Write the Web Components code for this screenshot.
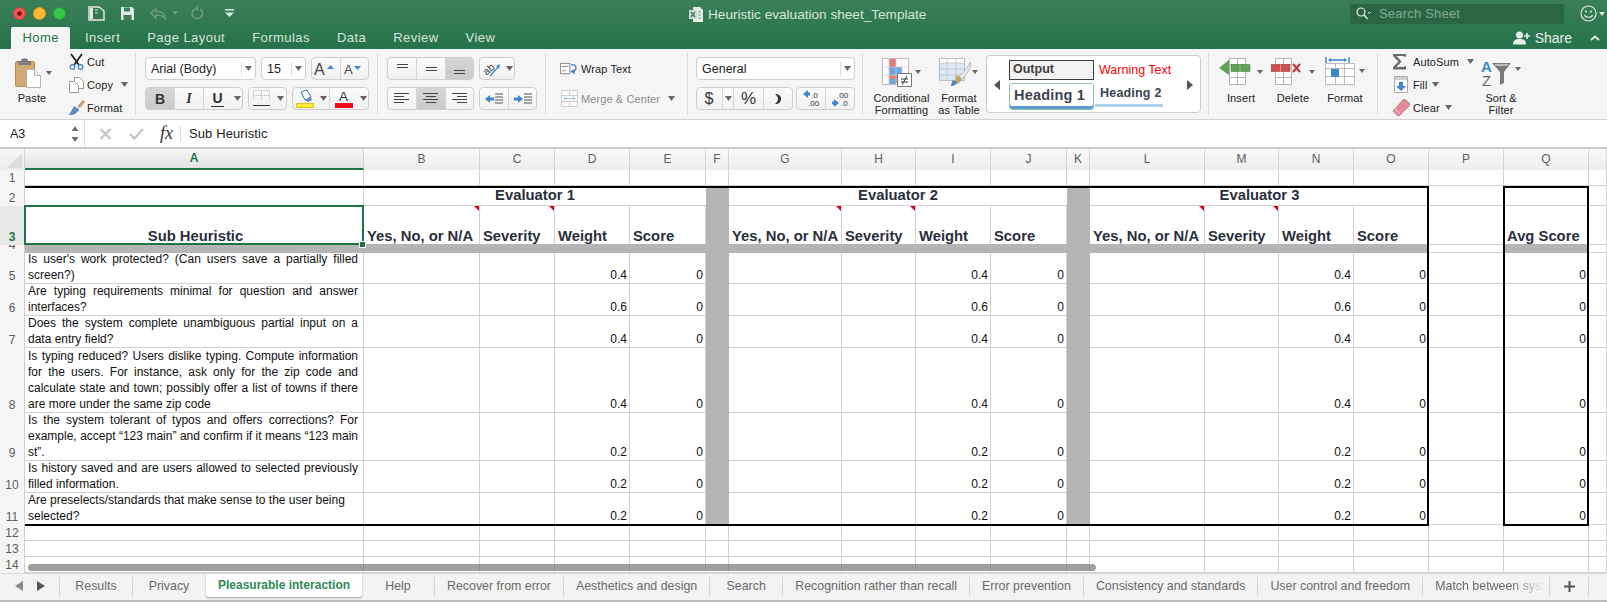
<!DOCTYPE html>
<html>
<head>
<meta charset="utf-8">
<title>Heuristic evaluation sheet_Template</title>
<style>
    html, body { margin: 0; padding: 0; background: #fff; overflow: hidden; }
    body { width: 1607px; height: 602px; display: flex; flex-direction: column; font-family: "Liberation Sans", sans-serif; }
</style>
</head>
<body>
<xl-titlebar></xl-titlebar>
<xl-ribbon></xl-ribbon>
<xl-formula-bar cell="A3" value="Sub Heuristic"></xl-formula-bar>
<xl-sheet></xl-sheet>
<xl-sheet-tabs></xl-sheet-tabs>

<script>
const CARET = `<svg width="7" height="5" viewBox="0 0 7 5"><path d="M0 0h7L3.500 5z" fill="#666"/></svg>`;

class XlTitlebar extends HTMLElement {
    constructor () {
        super();
        this.shadowDOM = this.attachShadow({mode: "open"});
    }
    connectedCallback() { this.render(); }
    render() {
        const tabs = ["Insert", "Page Layout", "Formulas", "Data", "Review", "View"];
        this.shadowDOM.innerHTML = `
        <style>
            :host { display: block; height: 49px; background: linear-gradient(#3a7f58, #26724a); font-family: "Liberation Sans", sans-serif; color: #d6e6dc; }
            .top { display: grid; grid-template-columns: 689px 661px 1fr; height: 27px; }
            .quick { display: flex; align-items: center; padding-left: 12.500px; height: 26px; }
            .dot { width: 13px; height: 13px; border-radius: 50%; margin-right: 7px; box-sizing: border-box; }
            .quick .sep { width: 1px; height: 16px; background: #3f8660; margin: 0 16px 0 5px; }
            .quick svg { display: block; }
            .title { display: flex; align-items: center; gap: 5px; font-size: 13.600px; height: 28px; white-space: nowrap; }
            .right { display: flex; align-items: center; }
            .search { width: 214px; height: 20px; margin-top: -1px; border-radius: 3px; background: #2a6644; display: flex; align-items: center; padding-left: 6px; box-sizing: border-box; gap: 2px; color: #84aa95; font-size: 13px; letter-spacing: .2px; }
            .smile { margin-left: 16px; margin-top: -1px; display: flex; align-items: center; gap: 2px; }
            .bottom { display: flex; height: 22px; padding-left: 11px; font-size: 13px; letter-spacing: .45px; position: relative; }
            .tab { padding: 0 13.500px; line-height: 22px; }
            .home { background: #f5f5f5; color: #217346; padding: 0 11px 0 11.500px; border-radius: 2px 2px 0 0; margin-right: 1.500px; }
            .share { margin-left: auto; display: flex; align-items: center; gap: 4px; padding-right: 7px; font-size: 14px; letter-spacing: 0; color: #e6f0ea; }
        </style>
        <div class="top">
            <div class="quick">
                <span class="dot" style="background:radial-gradient(circle,#7a1512 0 2px,#f0554d 2.500px);border:1px solid #d8403a"></span>
                <span class="dot" style="background:#fdb933;border:1px solid #dd9d2a"></span>
                <span class="dot" style="background:#34c748;border:1px solid #2aa53b;margin-right:0"></span>
                <span class="sep"></span>
                <svg width="17" height="15" viewBox="0 0 17 15" style="margin-left:0"><path d="M1 1h10l5 4v9H1z" fill="none" stroke="#dfeae3" stroke-width="1.500"/><path d="M2 2h3v11H2z" fill="#dfeae3"/><path d="M7 4h3M7 7h3" stroke="#dfeae3"/></svg>
                <svg width="15" height="15" viewBox="0 0 15 15" style="margin-left:15px"><path d="M1 1h11l2 2v11H1z" fill="#dfeae3"/><path d="M4 1.500h6v4H4z" fill="#3a7f58"/><path d="M3.500 9h8v5h-8z" fill="#3a7f58"/></svg>
                <svg width="16" height="13" viewBox="0 0 16 13" style="margin-left:15px"><path d="M1 6l5-4.500V4.500c5 0 9 1.500 9 7-2-3-5-3.500-9-3.500v3z" fill="none" stroke="#6a9c80" stroke-width="1.600"/></svg>
                <svg width="6" height="4" viewBox="0 0 6 4" style="margin-left:6px"><path d="M0 0h6L3 4z" fill="#6a9c80"/></svg>
                <svg width="13" height="14" viewBox="0 0 13 14" style="margin-left:13px"><path d="M9 3a5.200 5.200 0 1 1-5.500 0" fill="none" stroke="#6a9c80" stroke-width="1.700"/><path d="M7 0v5.500L3.500 3z" fill="#6a9c80"/></svg>
                <svg width="9" height="8" viewBox="0 0 9 8" style="margin-left:21px"><path d="M0 0h9v1.500H0zM0 3.500h9L4.500 8z" fill="#dfeae3"/></svg>
            </div>
            <div class="title">
                <svg width="14" height="15" viewBox="0 0 14 15"><path d="M4 0h7l3 3v12H4z" fill="#e6eee9"/><path d="M0 3h8v9H0z" fill="#cfdcd4"/><path d="M2 5l4 5M6 5l-4 5" stroke="#3a7f58" stroke-width="1.300"/><path d="M9 5h3M9 8h3M9 11h3" stroke="#7da68f"/></svg>
                <span>Heuristic evaluation sheet_Template</span>
            </div>
            <div class="right">
                <div class="search">
                    <svg width="15" height="13" viewBox="0 0 15 13"><circle cx="5" cy="5" r="4" fill="none" stroke="#e4eee8" stroke-width="1.200"/><path d="M8 8l3.500 4" stroke="#e4eee8" stroke-width="1.300"/><path d="M12 5l1.500 1.500L15 5" fill="none" stroke="#e4eee8"/></svg>
                    <span style="margin-left:6px">Search Sheet</span>
                </div>
                <div class="smile">
                    <svg width="17" height="17" viewBox="0 0 17 17"><circle cx="8.500" cy="8.500" r="7.500" fill="none" stroke="#dfeae3" stroke-width="1.200"/><circle cx="6" cy="6.500" r="1" fill="#dfeae3"/><circle cx="11" cy="6.500" r="1" fill="#dfeae3"/><path d="M4.500 10c1 3 7 3 8 0" fill="none" stroke="#dfeae3" stroke-width="1.200"/></svg>
                    <svg width="6" height="4" viewBox="0 0 6 4"><path d="M0 0h6L3 4z" fill="#dfeae3"/></svg>
                </div>
            </div>
        </div>
        <div class="bottom">
            <div class="tab home">Home</div>
            ${tabs.map(t => `<div class="tab">${t}</div>`).join("")}
            <div class="share">
                <svg width="18" height="14" viewBox="0 0 18 14"><circle cx="6.500" cy="4" r="3.500" fill="#e6f0ea"/><path d="M0 13.500c0-4 2-5.500 6.500-5.500S13 9.500 13 13.500z" fill="#e6f0ea"/><path d="M11 5h6M14 2v6" stroke="#e6f0ea" stroke-width="1.600"/></svg>
                <span style="margin-right:14px">Share</span>
                <svg width="10" height="6" viewBox="0 0 10 6"><path d="M1 5l4-3.500L9 5" fill="none" stroke="#e6f0ea" stroke-width="1.800"/></svg>
            </div>
        </div>`;
    }
}
customElements.define("xl-titlebar", XlTitlebar);

/* one segmented control, the cells are passed in by slot */
class XlSeg extends HTMLElement {
    constructor () {
        super();
        this.shadowDOM = this.attachShadow({mode: "open"});
    }
    connectedCallback() {
        this.shadowDOM.innerHTML = `
        <style>
            :host { display: inline-flex; height: 23px; box-sizing: border-box; border: 1px solid #cfcfcf; border-radius: 4px; background: linear-gradient(#fbfbfb, #f1f1f1); overflow: hidden; flex: none; }
            ::slotted(*) { display: flex; align-items: center; justify-content: center; box-sizing: border-box; height: 100%; border-right: 1px solid #d6d6d6; flex: none; }
            ::slotted(:last-child) { border-right: 0; }
            ::slotted(.on) { background: linear-gradient(#d6d6d6, #cacaca); }
            ::slotted(.soft) { border-right-color: transparent; }
        </style>
        <slot></slot>`;
    }
}
customElements.define("xl-seg", XlSeg);

class XlCombo extends HTMLElement {
    constructor () {
        super();
        this.shadowDOM = this.attachShadow({mode: "open"});
    }
    connectedCallback() {
        this.shadowDOM.innerHTML = `
        <style>
            :host { display: flex; align-items: center; height: 23px; box-sizing: border-box; border: 1px solid #cfcfcf; border-radius: 4px; background: #fff; font-size: 12.500px; color: #222; padding-left: 5px; flex: none; }
            span { flex: 1; white-space: nowrap; }
            i { display: flex; align-items: center; justify-content: center; width: 13px; height: 14px; border-left: 1px solid #dcdcdc; }
        </style>
        <span><slot></slot></span><i>${CARET}</i>`;
    }
}
customElements.define("xl-combo", XlCombo);

class XlBig extends HTMLElement {
    constructor () {
        super();
        this.shadowDOM = this.attachShadow({mode: "open"});
    }
    connectedCallback() {
        this.shadowDOM.innerHTML = `
        <style>
            :host { display: flex; flex-direction: column; align-items: center; flex: none; font-size: 11px; letter-spacing: .1px; line-height: 12px; color: #222; text-align: center; }
            .ico { height: 43px; box-sizing: border-box; padding-top: 9px; }
            .lbl { white-space: nowrap; }
        </style>
        <div class="ico"><slot></slot></div>
        <div class="lbl">${this.getAttribute("label")}</div>`;
    }
}
customElements.define("xl-big", XlBig);

class XlSmall extends HTMLElement {
    constructor () {
        super();
        this.shadowDOM = this.attachShadow({mode: "open"});
    }
    connectedCallback() {
        const caret = this.hasAttribute("caret") ? `<span style="margin-left:${this.getAttribute("caret")}px;display:flex">${CARET}</span>` : "";
        this.shadowDOM.innerHTML = `
        <style>
            :host { display: flex; align-items: center; height: 23px; font-size: 11px; letter-spacing: .1px; color: #222; white-space: nowrap; }
            .ico { display: flex; justify-content: center; width: 21px; }
            :host([dim]) { color: #8c8c8c; }
        </style>
        <span class="ico"><slot></slot></span><span>${this.getAttribute("label")}</span>${caret}`;
    }
}
customElements.define("xl-small", XlSmall);

class XlRibbon extends HTMLElement {
    constructor () {
        super();
        this.shadowDOM = this.attachShadow({mode: "open"});
    }
    connectedCallback() { this.render(); }
    render() {
        const lines = (rows) => rows.map(([x, w, y]) => `<path d="M${x} ${y}h${w}"/>`).join("");
        this.shadowDOM.innerHTML = `
        <style>
            :host { display: flex; height: 70px; flex: none; background: #f5f5f5; border-bottom: 1px solid #d2d2d2; box-sizing: content-box; font-family: "Liberation Sans", sans-serif; color: #222; }
            .group { position: relative; box-sizing: border-box; height: 70px; flex: none; }
            .group::after { content: ""; position: absolute; right: 0; top: 4px; bottom: 4px; width: 1px; background: #dcdcdc; }
            .group:last-child::after { display: none; }
            .rows { display: grid; grid-template-rows: 23px 23px; row-gap: 7px; padding-top: 8px; }
            .row { display: flex; gap: 5px; }
            .flex { display: flex; }
            .col { display: flex; flex-direction: column; padding-top: 1px; }
            .letter { font-size: 14px; font-weight: bold; color: #333; }
            svg { display: block; }
            .gallery { width: 215px; height: 58px; margin: 6px 0 0 -1px; box-sizing: border-box; border: 1px solid #cdcdcd; border-radius: 4px; background: #fff; display: grid; grid-template-columns: 22px 85px 1fr 16px; grid-template-rows: 20px 27px; row-gap: 3px; padding-top: 4px; align-items: center; flex: none; }
            .output { height: 20px; border: 1.500px solid #3f3f3f; background: #f2f2f2; box-sizing: border-box; font-size: 12.500px; font-weight: bold; color: #3f3f3f; line-height: 17px; padding-left: 3px; }
            .warn { color: #ff0000; font-size: 12.500px; padding-left: 5px; white-space: nowrap; }
            .h1 { height: 27px; box-sizing: border-box; border: 1px solid #8dc3a0; border-radius: 3px; font-size: 14.500px; font-weight: bold; color: #3b4550; line-height: 22px; padding-left: 4px; box-shadow: inset 0 -3px 0 #5b9bd5; background: #fff; white-space: nowrap; overflow: hidden; letter-spacing: .2px; }
            .h2 { font-size: 12.500px; font-weight: bold; color: #3b4550; padding-left: 5px; height: 21px; line-height: 20px; border-bottom: 3px solid #aed0ea; margin: 0 21px 0 1px; white-space: nowrap; box-sizing: content-box; letter-spacing: .2px; align-self: start; }
        </style>

        <div class="group flex" style="width:136px">
            <xl-big label="Paste" style="width:64px">
                <svg width="44" height="30" viewBox="0 0 44 30"><g transform="translate(5 0)"><rect x="0.500" y="3.500" width="19" height="25" rx="1.500" fill="#d3a973" stroke="#b48b58"/><path d="M6 3c0-2 1-2.500 3.500-2.500S13 1 13 3h3v4H3V3z" fill="#7d7d7d"/><path d="M11.500 11.500h8l6 6v12h-14z" fill="#fff" stroke="#b3b3b3"/><path d="M19.500 11.500v6h6" fill="#f0f0f0" stroke="#b3b3b3"/></g><path d="M36 13h6l-3 4z" fill="#666"/></svg>
            </xl-big>
            <div class="col" style="margin-left:2px">
                <xl-small label="Cut"><svg width="15" height="17" viewBox="0 0 15 17"><path d="M2 1l8 11M13 1L5 12" stroke="#222" stroke-width="1.800"/><circle cx="3.500" cy="14" r="2.300" fill="none" stroke="#3c7fc4" stroke-width="1.200"/><circle cx="11.500" cy="14" r="2.300" fill="none" stroke="#3c7fc4" stroke-width="1.200"/></svg></xl-small>
                <xl-small label="Copy" caret="8"><svg width="15" height="16" viewBox="0 0 15 16"><path d="M5.500.5h5l4 4v7h-9z" fill="#fff" stroke="#9a9a9a"/><path d="M.5 4.500h5l4 4v7h-9z" fill="#fff" stroke="#9a9a9a"/></svg></xl-small>
                <xl-small label="Format"><svg width="16" height="15" viewBox="0 0 16 15"><path d="M9 6l5-5.500 1.500 1.500L11 7.500z" fill="#c9a678" stroke="#8f7a5c" stroke-width=".6"/><path d="M5 6.500l5 3-2 2.500C6 14 3 15 0 14.500 2 13 3.500 10 5 6.500z" fill="#5b8fc7" stroke="#3f6f9f" stroke-width=".5"/></svg></xl-small>
            </div>
        </div>

        <div class="group rows" style="width:242px;padding-left:9px">
            <div class="row">
                <xl-combo style="width:111px">Arial (Body)</xl-combo>
                <xl-combo style="width:45px">15</xl-combo>
                <xl-seg>
                    <div style="width:29px"><svg width="24" height="14" viewBox="0 0 24 14"><text x="0" y="13" font-family="Liberation Sans" font-size="16" fill="#444">A</text><path d="M13 7l3.500-4L20 7z" fill="#3f84cc"/></svg></div>
                    <div style="width:27px"><svg width="22" height="14" viewBox="0 0 22 14"><text x="0" y="12" font-family="Liberation Sans" font-size="13" fill="#444">A</text><path d="M10 4h7l-3.500 4z" fill="#3f84cc"/></svg></div>
                </xl-seg>
            </div>
            <div class="row">
                <xl-seg>
                    <div class="on letter" style="width:29px">B</div>
                    <div style="width:29px;font:italic bold 14px 'Liberation Serif';color:#333">I</div>
                    <div class="soft" style="width:28px;font-size:14px;font-weight:bold;color:#333"><span style="border-bottom:1px solid #333;line-height:15px;padding:0 1px">U</span></div>
                    <div style="width:10px">${CARET}</div>
                </xl-seg>
                <xl-seg>
                    <div class="soft" style="width:26px"><svg width="17" height="17" viewBox="0 0 17 17"><path d="M.5.500h16v10M.5.500v10M8.500 1v10M1 5.500h15" fill="none" stroke="#b5b5b5" stroke-dasharray="1 1"/><path d="M0 15.500h17" stroke="#333" stroke-width="1"/></svg></div>
                    <div style="width:11px">${CARET}</div>
                </xl-seg>
                <xl-seg>
                    <div class="soft" style="width:25px"><svg width="18" height="19" viewBox="0 0 18 19"><path d="M5 3l6-2 4 7-6 3z" fill="#fff" stroke="#3f6f9f"/><path d="M9 11l6-3 1 3-4 2z" fill="#5b8fc7"/><path d="M.5 14.500h17v4H.500z" fill="#ffeb3b" stroke="#d9c51a"/></svg></div>
                    <div style="width:12px">${CARET}</div>
                    <div class="soft" style="width:28px"><svg width="18" height="19" viewBox="0 0 18 19"><text x="4" y="12" font-family="Liberation Sans" font-size="13.500" fill="#333">A</text><rect y="14" width="18" height="5" fill="#f00a1e"/></svg></div>
                    <div style="width:10px">${CARET}</div>
                </xl-seg>
            </div>
        </div>

        <div class="group rows" style="width:168px;padding-left:9px">
            <div class="row">
                <xl-seg>
                    <div style="width:29px"><svg width="13" height="12" viewBox="0 0 13 12" stroke="#444"><path d="M1 1.500h11M1 4.500h11"/></svg></div>
                    <div style="width:29px"><svg width="13" height="12" viewBox="0 0 13 12" stroke="#444"><path d="M1 4.500h11M1 7.500h11"/></svg></div>
                    <div class="on" style="width:27px"><svg width="13" height="12" viewBox="0 0 13 12" stroke="#444"><path d="M1 7.500h11M1 10.500h11"/></svg></div>
                </xl-seg>
                <xl-seg>
                    <div class="soft" style="width:24px"><svg width="18" height="18" viewBox="0 0 18 18"><text transform="rotate(-40 7 9)" x="0" y="12" font-family="Liberation Sans" font-size="10.500" fill="#444">ab</text><path d="M7 16L16 6" stroke="#4a8cd0" stroke-width="1.300"/><path d="M17 4l-1 5-3-3z" fill="#4a8cd0"/></svg></div>
                    <div style="width:10px">${CARET}</div>
                </xl-seg>
            </div>
            <div class="row">
                <xl-seg>
                    <div style="width:29px"><svg width="16" height="12" viewBox="0 0 16 12" fill="none" stroke="#444">${lines([[0,15,.5],[0,10,3.5],[0,15,6.5],[0,10,9.5]])}</svg></div>
                    <div class="on" style="width:29px"><svg width="16" height="12" viewBox="0 0 16 12" fill="none" stroke="#444">${lines([[0,15,.5],[3,10,3.5],[0,15,6.500],[3,10,9.500]])}</svg></div>
                    <div style="width:27px"><svg width="16" height="12" viewBox="0 0 16 12" fill="none" stroke="#444">${lines([[0,15,.5],[5,10,3.5],[0,15,6.5],[5,10,9.5]])}</svg></div>
                </xl-seg>
                <xl-seg>
                    <div style="width:29px"><svg width="18" height="12" viewBox="0 0 18 12"><path d="M0 6l5-4v2.500h4v3H5V10z" fill="#3f84cc"/><path d="M10 1h8M10 4h8M10 7h8M10 10h8" stroke="#444" stroke-width=".9"/></svg></div>
                    <div style="width:27px"><svg width="18" height="12" viewBox="0 0 18 12"><path d="M9 6L4 2v2.500H0v3h4V10z" fill="#3f84cc"/><path d="M10 1h8M10 4h8M10 7h8M10 10h8" stroke="#444" stroke-width=".9"/></svg></div>
                </xl-seg>
            </div>
        </div>

        <div class="group rows" style="width:142px;padding-left:14px">
            <xl-small label="Wrap Text"><svg width="21" height="14" viewBox="0 0 21 14" style="margin-right:3px"><path d="M.5.500h11v12H.5z" fill="#fff" stroke="#777"/><path d="M2 4h8M2 9h5" stroke="#777"/><path d="M13 2c6-1 8 6 2 8" fill="none" stroke="#3f84cc" stroke-width="1.500"/><path d="M17 7v6l-5-3z" fill="#3f84cc"/></svg></xl-small>
            <xl-small label="Merge &amp; Center" dim caret="8"><svg width="17" height="17" viewBox="0 0 17 17" style="margin-right:3px"><path d="M.5.500h16v16H.5zM.5 5.500h16M.5 11.500h16M8.500.5v5M8.500 11.500v5" fill="#fbfbfb" stroke="#cfcfcf"/><path d="M3 8.500h11M3 8.500l2-2M3 8.500l2 2M14 8.500l-2-2M14 8.500l-2 2" stroke="#9dc2e6" fill="none"/></svg></xl-small>
        </div>

        <div class="group rows" style="width:175px;padding-left:8px">
            <xl-combo style="width:159px">General</xl-combo>
            <div class="row" style="gap:3px">
                <xl-seg style="width:97px">
                    <div class="soft" style="width:25px;font-size:16px;color:#333">$</div>
                    <div style="width:12px;border-left:1px solid #d6d6d6">${CARET}</div>
                    <div style="width:30px;font-size:17px;color:#333">%</div>
                    <div style="width:28px"><svg width="8" height="12" viewBox="0 0 8 12"><path d="M1 1c4 0 6 2 6 5s-2 5-6 5c2-2 3-3 3-5S3 3 1 1z" fill="#333"/></svg></div>
                </xl-seg>
                <xl-seg style="width:59px">
                    <div style="width:29px"><svg width="17" height="17" viewBox="0 0 17 17"><path d="M0 4l5-4v2.500h2v3H5V8z" fill="#3f84cc"/><text x="8" y="7.500" font-family="Liberation Sans" font-size="8" fill="#333">.0</text><text x="5" y="16" font-family="Liberation Sans" font-size="8" fill="#333">.00</text></svg></div>
                    <div style="width:28px"><svg width="17" height="17" viewBox="0 0 17 17"><text x="5" y="7.500" font-family="Liberation Sans" font-size="8" fill="#333">.00</text><path d="M7 13L2 9v2.500H0v3h2V17z" fill="#3f84cc"/><text x="9" y="16" font-family="Liberation Sans" font-size="8" fill="#333">.0</text></svg></div>
                </xl-seg>
            </div>
        </div>

        <div class="group flex" style="width:346px;padding-left:9px">
            <xl-big label="Conditional<br>Formatting" style="width:59px">
                <svg width="40" height="30" viewBox="0 0 40 30"><path d="M.5.500h26v26H.5z" fill="#fff" stroke="#bdbdbd"/><path d="M7 1h7v8H7z" fill="#e07f7f"/><path d="M7 9h7v8H7z" fill="#6fa8e0"/><path d="M14 9h6v8h-6z" fill="#6fa8e0"/><path d="M7 17h14v8H7z" fill="#e07f7f"/><path d="M7 25h7v1H7zM7 21h7v5H7z" fill="#6fa8e0"/><path d="M7 1v25M14 1v25M20 1v25M1 9h25M1 17h25" stroke="#cfcfcf" stroke-width=".7"/><path d="M15.500 15.500h14v13h-14z" fill="#fff" stroke="#777"/><path d="M19 21h7M19 24h7M25 18l-5 9" stroke="#333"/><path d="M33 12h6l-3 4z" fill="#666"/></svg>
            </xl-big>
            <xl-big label="Format<br>as Table" style="width:56px">
                <svg width="40" height="30" viewBox="0 0 40 30"><path d="M.5.500h25v22H.5z" fill="#fff" stroke="#bdbdbd"/><path d="M1 5h24v17H1z" fill="#dce8f5"/><path d="M8 1v22M17 1v22M1 5h24M1 11h24M1 17h24" stroke="#bdbdbd" stroke-width=".7"/><path d="M31 4c-1 4-7 11-12 15l3 3c5-4 10-12 10-17z" fill="#e8e8e8" stroke="#999" stroke-width=".6"/><path d="M17 18c4-1 6 2 5 5-1 2-6 4-10 5 2-1 4-3 5-10z" fill="#c9a35f"/><path d="M12 28c3 0 5-2 6-4l-4-2c-1 2-2 4-2 6z" fill="#3f84cc"/><path d="M33 12h6l-3 4z" fill="#666"/></svg>
            </xl-big>
            <div class="gallery">
                <svg width="6" height="10" viewBox="0 0 6 10" style="margin-left:7px;grid-row:1 / span 2"><path d="M6 0v10L0 5z" fill="#555"/></svg>
                <div class="output">Output</div>
                <div class="warn">Warning Text</div>
                <svg width="6" height="10" viewBox="0 0 6 10" style="margin-left:3px;grid-row:1 / span 2;grid-column:4"><path d="M0 0v10l6-5z" fill="#555"/></svg>
                <div class="h1" style="grid-column:2">Heading 1</div>
                <div class="h2" style="grid-column:3">Heading 2</div>
            </div>
        </div>

        <div class="group flex" style="width:169px;padding-left:6px">
            <xl-big label="Insert" style="width:52px">
                <svg width="44" height="28" viewBox="0 0 44 28"><path d="M10.500.500h16v26h-16zM10.500 6.500h16M10.500 19.500h16M18.500.500v26" fill="#fff" stroke="#b5b5b5"/><path d="M12 6.500h19v7H12z" fill="#62a05c" stroke="#4d8a48" stroke-width=".6"/><path d="M21 6.500v7" stroke="#8cc087"/><path d="M10 2v15L0 10z" fill="#62a05c"/><path d="M38 12h6l-3 4z" fill="#666"/></svg>
            </xl-big>
            <xl-big label="Delete" style="width:52px">
                <svg width="44" height="28" viewBox="0 0 44 28"><path d="M4.500.500h16v26h-16zM4.500 6.500h16M4.500 19.500h16M12.500.500v26" fill="#fff" stroke="#b5b5b5"/><path d="M0 6.500h19v7H0z" fill="#cc4f52" stroke="#b03c3f" stroke-width=".6"/><path d="M9.500 6.500v7" stroke="#e59a9c"/><path d="M22 6l7 8M29 6l-7 8" stroke="#c0393d" stroke-width="2.200"/><path d="M38 12h6l-3 4z" fill="#666"/></svg>
            </xl-big>
            <xl-big label="Format" style="width:52px">
                <svg width="40" height="28" viewBox="0 0 40 28" style="margin-top:-1px"><path d="M.5 6.500h29v21H.5zM.5 11.500h29M10.500 6.500v21M19.500 6.500v21M.5 19.500h29" fill="#fff" stroke="#bdbdbd"/><rect x="6" y="12" width="8" height="8" fill="#3f84cc"/><path d="M1 0v6M24 0v6M4 3h17" stroke="#3f84cc" stroke-width="1.400"/><path d="M3 3l3-2v4zM22 3l-3-2v4z" fill="#3f84cc"/><path d="M34 12h6l-3 4z" fill="#666"/></svg>
            </xl-big>
        </div>

        <div class="group flex" style="width:229px;padding-left:14px">
            <div class="col" style="width:79px">
                <xl-small label="AutoSum" caret="8"><svg width="18" height="17" viewBox="0 0 18 17" style="margin-right:3px"><path d="M1 1h13v3L11 3H4.500l5 5.500-5 5.500H11l3-1v3.500H1V14l5.500-5.500L1 3z" fill="#6a6a6a"/></svg></xl-small>
                <xl-small label="Fill" caret="5"><svg width="15" height="17" viewBox="0 0 15 17" style="margin-right:3px"><path d="M.5.500h13v16H.5z" fill="#fff" stroke="#aaa"/><path d="M1 1h12v3H1z" fill="#cfcfcf"/><path d="M5 6h4v4h3l-5 5-5-5h3z" fill="#3f84cc"/></svg></xl-small>
                <xl-small label="Clear" caret="5"><svg width="17" height="17" viewBox="0 0 17 17" style="margin-right:2px"><path d="M1 11L10 1c1-1 2-1 3 0l3 3c1 1 1 2 0 3l-9 9c-1 1-2 1-3 0l-3-3c-1-1-1-1 0-2z" fill="#e48a9a" stroke="#b85d6f" stroke-width=".7"/><path d="M2 10l5 5" stroke="#f7d0d8"/></svg></xl-small>
            </div>
            <xl-big label="Sort &amp;<br>Filter" style="width:60px">
                <svg width="40" height="30" viewBox="0 0 40 30" style="margin-top:1px"><text x="0" y="13" font-family="Liberation Sans" font-size="15" font-weight="bold" fill="#3f84cc">A</text><text x="1" y="27" font-family="Liberation Sans" font-size="15" fill="#666">Z</text><path d="M11 4h19l-7 9v11l-4 2V13z" fill="#7a7a7a"/><path d="M13 5h15l-2 2H15z" fill="#bdbdbd"/><path d="M34 8h6l-3 4z" fill="#666"/></svg>
            </xl-big>
        </div>`;
    }
}
customElements.define("xl-ribbon", XlRibbon);

class XlFormulaBar extends HTMLElement {
    constructor () {
        super();
        this.shadowDOM = this.attachShadow({mode: "open"});
    }
    connectedCallback() {
        this.shadowDOM.innerHTML = `
        <style>
            :host { display: flex; align-items: center; height: 27px; flex: none; background: #fff; border-bottom: 2px solid #c9c9c9; font-family: "Liberation Sans", sans-serif; font-size: 13px; color: #222; }
            .name { width: 85px; box-sizing: border-box; height: 100%; padding-left: 10px; display: flex; align-items: center; justify-content: space-between; border-right: 1px solid #dcdcdc; font-size: 12.500px; padding-right: 5px; }
            .btns { display: flex; align-items: center; width: 95px; height: 100%; box-sizing: border-box; }
            .val { padding-left: 8px; border-left: 1px solid #dcdcdc; height: 16px; line-height: 15px; letter-spacing: .1px; }
            svg { display: block; }
        </style>
        <div class="name"><span>${this.getAttribute("cell")}</span>
            <svg width="8" height="18" viewBox="0 0 8 18"><path d="M4 1l3.500 5h-7zM4 17l3.500-5h-7z" fill="#6f6f6f"/></svg>
        </div>
        <div class="btns">
            <svg width="13" height="12" viewBox="0 0 13 12" style="margin-left:14px"><path d="M1.500 1l10 10M11.500 1l-10 10" stroke="#c4c4c4" stroke-width="2.200"/></svg>
            <svg width="15" height="12" viewBox="0 0 15 12" style="margin-left:17px"><path d="M1 6l4.500 4.500L14 1" fill="none" stroke="#c4c4c4" stroke-width="2.200"/></svg>
            <span style="margin-left:16px;font:italic 18px 'Liberation Serif';color:#333">fx</span>
        </div>
        <div class="val">${this.getAttribute("value")}</div>`;
    }
}
customElements.define("xl-formula-bar", XlFormulaBar);

class XlSheet extends HTMLElement {
    constructor () {
        super();
        this.shadowDOM = this.attachShadow({mode: "open"});
    }
    connectedCallback() { this.render(); }
    render() {
        const edges = [25, 364, 480, 555, 630, 706, 729, 842, 916, 991, 1067, 1090, 1205, 1279, 1354, 1429, 1504, 1589, 1607];
        const columns = edges.slice(1).map((e, i) => (e - edges[i]) + "px");
        const names = "ABCDEFGHIJKLMNOPQ".split("").concat([""]);
        const heights = [16, 20, 39, 8, 31, 32, 32, 65, 48, 32, 32, 16, 16, 16];
        const rows = [
            ["Is user's work protected? (Can users save a partially filled screen?)", .4, true],
            ["Are typing requirements minimal for question and answer interfaces?", .6, true],
            ["Does the system complete unambiguous partial input on a data entry field?", .4, true],
            ["Is typing reduced? Users dislike typing. Compute information for the users. For instance, ask only for the zip code and calculate state and town; possibly offer a list of towns if there are more under the same zip code", .4, true],
            ["Is the system tolerant of typos and offers corrections? For example, accept “123 main” and confirm if it means “123 main st”.", .2, true],
            ["Is history saved and are users allowed to selected previously filled information.", .2, true],
            ["Are preselects/standards that make sense to the user being selected?", .2, false]
        ];
        const heads = {1: "Yes, No, or N/A", 2: "Severity", 3: "Weight", 4: "Score", 6: "Yes, No, or N/A", 7: "Severity", 8: "Weight", 9: "Score", 11: "Yes, No, or N/A", 12: "Severity", 13: "Weight", 14: "Score", 16: "Avg Score"};
        const flagged = [1, 2, 6, 7, 11, 12];
        // every cell gets its own grid line, the gray bands and frames share the same tracks
        const at = (r, c, span) => `grid-row:${r + 1};grid-column:${c + 2} / span ${span || 1}`;
        let html = `<div class="corner" style="grid-row:1;grid-column:1"><i></i></div>`;
        names.forEach((n, i) => { html += `<div class="ch ${i === 0 ? "sel" : ""}" style="grid-row:1;grid-column:${i + 2}">${n}</div>`; });
        heights.forEach((h, r) => {
            const num = r + 1;
            html += `<div class="rh ${num === 3 ? "sel" : ""}" style="grid-row:${num + 1};grid-column:1">${num}</div>`;
            names.forEach((n, c) => {
                if (num === 2 && [1, 6, 11].includes(c)) {
                    html += `<div class="c merged" style="${at(num, c, 4)}">Evaluator ${c === 1 ? 1 : c === 6 ? 2 : 3}</div>`;
                    return;
                }
                if (num === 2 && ((c > 1 && c < 5) || (c > 6 && c < 10) || (c > 11 && c < 15))) return;
                let cls = "c", text = "";
                if (num === 3 && c === 0) { cls += " head picked"; text = "Sub Heuristic"; }
                else if (num === 3 && heads[c]) { cls += " head"; text = heads[c]; if (flagged.includes(c)) cls += " flag"; }
                else if (num >= 5 && num <= 11) {
                    const row = rows[num - 5];
                    if (c === 0) { cls += row[2] ? " text just" : " text"; text = `<span>${row[0]}</span>`; }
                    else if ([3, 8, 13].includes(c)) { cls += " val"; text = row[1]; }
                    else if ([4, 9, 14, 16].includes(c)) { cls += " val"; text = "0"; }
                }
                html += `<div class="${cls}" style="${at(num, c)}">${text}</div>`;
            });
        });
        this.shadowDOM.innerHTML = `
        <style>
            :host { display: block; height: 424px; flex: none; position: relative; overflow: hidden; background: #fff; font-family: "Liberation Sans", sans-serif; }
            .grid { display: grid; grid-template-columns: 25px ${columns.join(" ")}; grid-template-rows: 21px ${heights.map(h => h + "px").join(" ")}; width: 1607px; }
            .corner { background: linear-gradient(#f8f8f8, #ececec); border-right: 1px solid #d4d4d4; box-sizing: border-box; }
            .corner i { display: block; width: 0; height: 0; margin: 4px 0 0 7px; border-left: 15px solid transparent; border-bottom: 15px solid #dedede; }
            .ch { background: linear-gradient(#f9f9f9, #eeeeee); border-right: 1px solid #d4d4d4; box-sizing: border-box; font-size: 12px; line-height: 21px; text-align: center; color: #5d5d5d; }
            .ch.sel { background: linear-gradient(#f6f6f6, #e2e2e2); border-bottom: 2px solid #217346; color: #217346; font-weight: bold; line-height: 19px; }
            .rh { background: #f6f6f6; border-right: 1px solid #cfcfcf; box-sizing: border-box; font-size: 12px; text-align: center; color: #5d5d5d; display: flex; align-items: flex-end; justify-content: center; line-height: 16px; overflow: hidden; }
            .rh.sel { color: #217346; font-weight: bold; background: #e8e8e8; }
            .c { border-right: 1px solid #d1d1d1; border-bottom: 1px solid #d1d1d1; box-sizing: border-box; position: relative; display: flex; align-items: flex-end; font-size: 12px; color: #111; line-height: 16px; min-width: 0; }
            .merged { justify-content: center; align-items: center; font-size: 14.800px; font-weight: bold; color: #2b2f3d; border-right: 0; line-height: 19px; }
            .head { font-size: 14.800px; font-weight: bold; color: #2b2f3d; line-height: 18px; padding-left: 3px; white-space: nowrap; border-bottom: 0; }
            .head.picked { justify-content: center; }
            .picked::before { content: ""; position: absolute; left: -1px; top: -1px; right: -1px; bottom: 0; border: 2px solid #217346; z-index: 3; }
            .picked::after { content: ""; position: absolute; right: -3px; bottom: -3px; width: 5px; height: 5px; background: #217346; border: 1px solid #fff; z-index: 4; }
            .flag::after { content: ""; position: absolute; top: 0; right: 0; border-top: 5px solid #d0021b; border-left: 5px solid transparent; }
            .text { padding-left: 3px; padding-right: 5px; }
            .just { text-align: justify; }
            .text span { display: block; width: 100%; }
            .val { justify-content: flex-end; padding-right: 2px; }
            .gray { background: #b5b5b5; z-index: 1; }
            .frame { border: solid #000; border-width: 2px 2px 2px 0; z-index: 2; pointer-events: none; margin-bottom: -1px; }
            .frame.q { border-left-width: 2px; margin-left: -1px; }
            .bar { position: absolute; left: 28px; width: 1068px; bottom: 2px; height: 7px; border-radius: 4px; background: rgba(128, 128, 128, .75); z-index: 5; }
        </style>
        <div class="grid">
            ${html}
            <div class="gray" style="grid-column:7;grid-row:3 / 13"></div>
            <div class="gray" style="grid-column:12;grid-row:3 / 13"></div>
            <div class="gray" style="grid-column:2 / 17;grid-row:5;margin-top:-1px"></div>
            <div class="gray" style="grid-column:18;grid-row:5;margin-top:-1px"></div>
            <div class="frame" style="grid-column:2 / 17;grid-row:3 / 13"></div>
            <div class="frame q" style="grid-column:18;grid-row:3 / 13"></div>
        </div>
        <div class="bar"></div>`;
    }
}
customElements.define("xl-sheet", XlSheet);

class XlSheetTabs extends HTMLElement {
    constructor () {
        super();
        this.shadowDOM = this.attachShadow({mode: "open"});
    }
    connectedCallback() {
        const tabs = ["Results", "Privacy", "Pleasurable interaction", "Help", "Recover from error", "Aesthetics and design", "Search", "Recognition rather than recall", "Error prevention", "Consistency and standards", "User control and freedom"];
        this.shadowDOM.innerHTML = `
        <style>
            :host { display: flex; height: 29px; flex: none; box-sizing: border-box; background: #f3f3f3; border-top: 1px solid #d8d8d8; border-bottom: 2px solid #bcbcbc; font-family: "Liberation Sans", sans-serif; font-size: 12.400px; color: #6a6a6a; overflow: hidden; }
            .nav { width: 60px; display: flex; align-items: center; box-sizing: border-box; padding: 0 0 2px 15px; gap: 14px; margin-top: 3px; border-right: 1px solid #d4d4d4; flex: none; height: 19px; }
            .tab { min-width: 73px; box-sizing: border-box; padding: 0 12px; height: 19px; margin-top: 3px; line-height: 18px; text-align: center; white-space: nowrap; border-right: 1px solid #d4d4d4; flex: none; }
            .tab.on { height: 23px; margin-top: 0; line-height: 23px; background: #fff; color: #2e8b57; font-size: 12px; font-weight: bold; border: 0; border-radius: 0 0 3px 3px; box-shadow: 0 1px 2px rgba(0,0,0,.35); width: 156px; }
            .tab.before { border-right-color: transparent; }
            .tab.last { width: 126px; min-width: 0; overflow: hidden; text-align: left; -webkit-mask-image: linear-gradient(90deg, #000 70%, transparent 97%); mask-image: linear-gradient(90deg, #000 70%, transparent 97%); }
            .lastwrap { border-right: 1px solid #d4d4d4; height: 19px; margin-top: 3px; flex: none; }
            .lastwrap .tab { margin: 0; border: 0; }
            .plus { width: 38px; height: 19px; margin-top: 3px; border-right: 1px solid #d4d4d4; display: flex; align-items: center; justify-content: center; flex: none; }
            svg { display: block; }
        </style>
        <div class="nav">
            <svg width="8" height="10" viewBox="0 0 8 10"><path d="M8 0v10L0 5z" fill="#8a8a8a"/></svg>
            <svg width="8" height="10" viewBox="0 0 8 10"><path d="M0 0v10l8-5z" fill="#555"/></svg>
        </div>
        ${tabs.map((t, i) => `<div class="tab ${i === 2 ? "on" : i === 1 ? "before" : ""}">${t}</div>`).join("")}
        <div class="lastwrap"><div class="tab last">Match between system</div></div>
        <div class="plus"><svg width="11" height="11" viewBox="0 0 11 11"><path d="M5.500 0v11M0 5.500h11" stroke="#555" stroke-width="2"/></svg></div>`;
    }
}
customElements.define("xl-sheet-tabs", XlSheetTabs);
</script>
</body>
</html>
